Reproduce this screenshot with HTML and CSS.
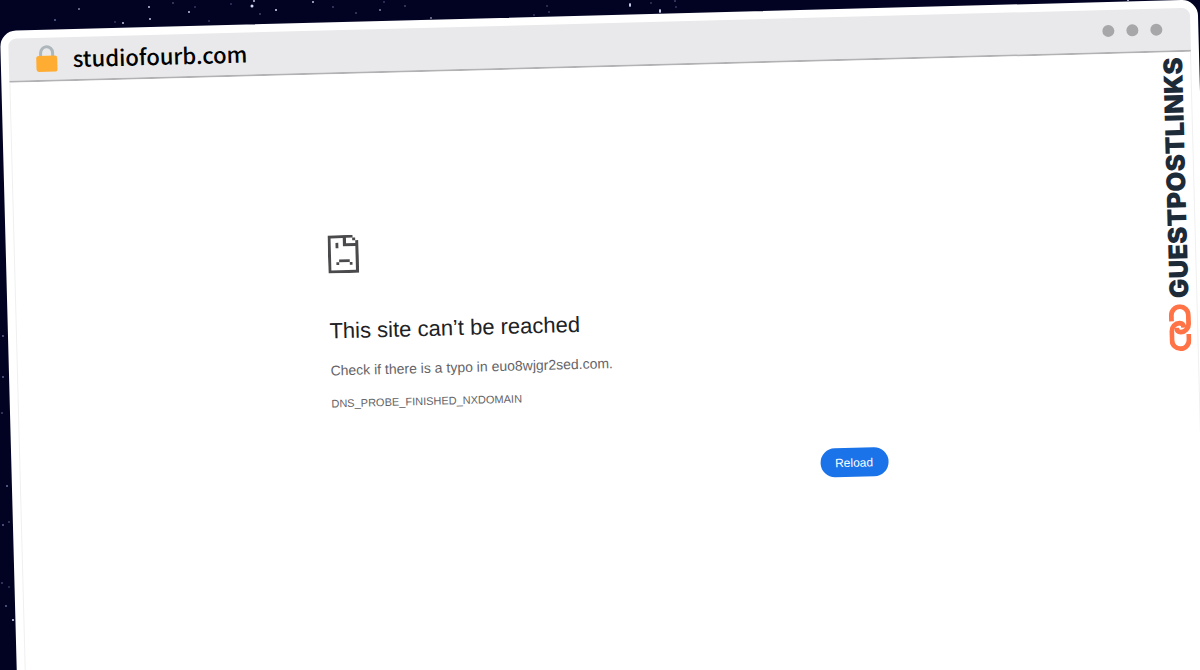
FILE: index.html
```html
<!DOCTYPE html>
<html lang="en">
  <head>
    <meta charset="UTF-8">
    <title>studiofourb.com</title>
    <link rel="stylesheet" href="styles.css">
  </head>
  <body>
    <!-- Night sky -->
    <svg class="sky" width="1200" height="670" viewBox="0 0 1200 670" aria-hidden="true">
      <g fill="#d5dcf5">
        <circle cx="252" cy="6" r="1.5"/>
        <circle cx="254" cy="1" r="0.9"/>
        <circle cx="276" cy="10" r="1"/>
        <circle cx="79" cy="9" r="0.8"/>
        <circle cx="149" cy="7" r="0.9"/>
        <circle cx="150" cy="19" r="0.9"/>
        <circle cx="123" cy="23" r="0.9"/>
        <circle cx="189" cy="12" r="0.9"/>
        <circle cx="313" cy="2" r="0.9"/>
        <circle cx="380" cy="10" r="0.8"/>
        <ellipse cx="630" cy="5" rx="1" ry="2"/>
        <ellipse cx="660" cy="11" rx="1" ry="2"/>
        <circle cx="431" cy="18" r="0.8"/>
        <circle cx="1128" cy="0" r="1"/>
        <circle cx="13" cy="620" r="1"/>
      </g>
      <g fill="#68719c">
        <circle cx="55" cy="20" r="0.9"/>
        <circle cx="115" cy="22" r="0.7"/>
        <circle cx="173" cy="3" r="0.8"/>
        <circle cx="195" cy="7" r="0.7"/>
        <circle cx="209" cy="21" r="0.7"/>
        <circle cx="231" cy="4" r="0.7"/>
        <circle cx="260" cy="14" r="0.8"/>
        <circle cx="333" cy="7" r="0.8"/>
        <circle cx="356" cy="13" r="0.8"/>
        <circle cx="384" cy="2" r="0.7"/>
        <circle cx="405" cy="6" r="0.8"/>
        <circle cx="547" cy="6" r="0.7"/>
        <circle cx="549" cy="12" r="0.7"/>
        <circle cx="534" cy="15" r="0.7"/>
        <circle cx="651" cy="3" r="0.7"/>
        <circle cx="675" cy="1" r="0.8"/>
        <circle cx="676" cy="7" r="0.7"/>
        <circle cx="3" cy="336" r="0.9"/>
        <circle cx="3" cy="377" r="0.9"/>
        <circle cx="2" cy="413" r="0.8"/>
        <circle cx="7" cy="486" r="1"/>
        <circle cx="9" cy="522" r="0.8"/>
        <circle cx="3" cy="525" r="0.9"/>
        <circle cx="2" cy="583" r="0.8"/>
        <circle cx="9" cy="587" r="0.7"/>
        <circle cx="6" cy="606" r="0.9"/>
      </g>
    </svg>

    <div class="window">
      <header class="titlebar">
        <svg class="lock" width="22" height="28" viewBox="0 0 22 28" aria-hidden="true">
          <path d="M5 12V8a6 6 0 0 1 12 0v4" fill="none" stroke="#adb6bb" stroke-width="3"/>
          <rect x="0.5" y="11" width="21" height="16" rx="2.5" fill="#ffac33"/>
        </svg>
        <span class="address">studiofourb.com</span>
        <div class="dots"><i></i><i></i><i></i></div>
      </header>

      <main class="page">
        <div class="error">
          <!-- Sad page icon -->
          <svg class="sad-page" width="31" height="38" viewBox="0 0 31 38" fill="#4a4a4d" aria-hidden="true">
            <path d="M0 0H25V2.7H18.4V8.3H27.6V5.4H30.7V38H0ZM3 3V35H27.6V11.2H15.2V3Z" fill-rule="evenodd"/>
            <path d="M24.6 2.7H27.6V5.4H24.6ZM7.8 7.6H10.6V13H7.8ZM11 24.4H21.6V27.1H11ZM8.2 27.1H11V29.8H8.2ZM21.6 27.1H24.3V29.8H21.6Z"/>
          </svg>
          <h1>This site can’t be reached</h1>
          <p>Check if there is a typo in euo8wjgr2sed.com.</p>
          <div class="code">DNS_PROBE_FINISHED_NXDOMAIN</div>
          <button class="reload" type="button">Reload</button>
        </div>
      </main>

      <div class="brand">
        <span>GUESTPOSTLINKS</span>
        <svg width="22" height="47" viewBox="0 0 22 47" fill="none" stroke="#ff7347" stroke-width="4.8" aria-hidden="true">
          <path d="M2.5 17V11A8.5 8.5 0 0 1 19.5 11V20A8 8 0 0 1 11.5 28Q7.5 28 7.5 23.5"/>
          <path d="M19.5 30V36A8.5 8.5 0 0 1 2.5 36V27A8 8 0 0 1 10.5 19Q14.5 19 14.5 23.5"/>
        </svg>
      </div>
    </div>
  </body>
</html>
```

FILE: styles.css
```css
body {
  margin: 0;
  height: 100vh;
  overflow: hidden;
  background-color: #020323;
  font-family: "Liberation Sans", Arial, sans-serif;
}
.sky {
  position: absolute;
  top: 0;
  left: 0;
}
/* Tilted browser window, runs off the bottom of the screen */
.window {
  position: relative;
  box-sizing: border-box;
  min-height: 110vh;
  margin: 31px 2px 0 0;
  border: 8px solid white;
  border-radius: 16px;
  background-color: white;
  transform: rotate(-1.5deg);
  transform-origin: 0 0;
}
.titlebar {
  display: flex;
  align-items: center;
  height: 42px;
  padding: 0 28px 0 27px;
  border-bottom: 2px solid #b2b2b4;
  border-radius: 8px 8px 0 0;
  background-color: #e9e9eb;
}
.address {
  margin-left: 15px;
  font-family: "Noto Sans CJK SC", "Noto Sans", sans-serif;
  font-size: 22px;
  font-weight: 500;
  line-height: 32px;
  padding-bottom: 2px;
  color: black;
}
.dots {
  display: flex;
  gap: 12px;
  margin-left: auto;
}
.dots i {
  width: 12px;
  height: 12px;
  border-radius: 50%;
  background-color: #a7a7a9;
}
.page {
  min-height: 100vh;
  padding: 161px 24px 0;
  border: 1px solid #f0f0f1;
  border-top: 0;
}
.error {
  display: flex;
  flex-direction: column;
  max-width: 555px;
  margin: 0 auto;
  color: #646468;
}
.sad-page {
  margin-bottom: 44px;
}
h1 {
  margin: 0 0 15px;
  font-size: 22px;
  font-weight: normal;
  line-height: 28px;
  color: #202124;
}
p {
  margin: 0 0 15px;
  font-size: 14px;
  line-height: 20px;
}
.code {
  font-size: 11px;
  line-height: 16px;
}
.reload {
  align-self: flex-end;
  width: 68px;
  height: 29px;
  margin-top: 50px;
  padding: 0;
  border: none;
  border-radius: 15px;
  background-color: #1a73e8;
  color: white;
  font-family: inherit;
  font-size: 12px;
  cursor: pointer;
}
/* Sideways logo along the right edge */
.brand {
  position: absolute;
  top: 49px;
  right: 4px;
  display: flex;
  flex-direction: column;
  align-items: center;
  gap: 6px;
}
.brand span {
  writing-mode: vertical-rl;
  transform: rotate(180deg);
  font-family: Inter, sans-serif;
  font-size: 26px;
  font-weight: 900;
  line-height: 28px;
  color: #1d2b38;
}
```
